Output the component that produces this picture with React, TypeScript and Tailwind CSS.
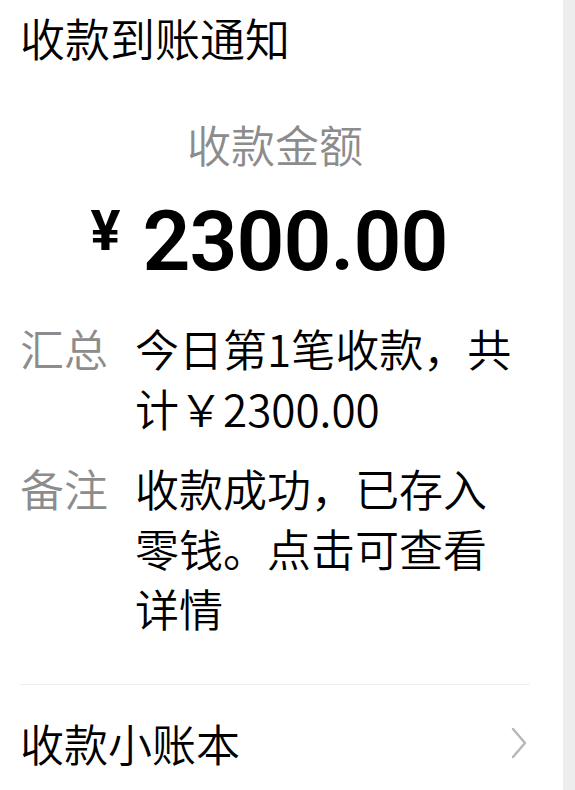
export default function App() {
  const rows = [
    { label: '汇总', value: '今日第1笔收款，共计￥2300.00' },
    { label: '备注', value: '收款成功，已存入零钱。点击可查看详情' },
  ]

  return (
    <div className="flex h-[790px] w-full overflow-hidden bg-[#ededed] font-['Noto_Sans_CJK_SC',sans-serif] font-[350]">
      <div className="flex w-[563px] flex-col bg-white pl-[20px] pr-[33px]">
        <h1 className="pt-[8px] text-[45px] leading-[60px] font-[350] text-black">收款到账通知</h1>

        <div className="mt-[46px] text-center text-[44px] leading-[60px] text-[#8c8c8c]">收款金额</div>

        <div className="mt-[23px] flex items-start justify-center pr-[12px] text-black">
          <span className="mt-[4px] mr-[22px] font-['Roboto',sans-serif] text-[56px] leading-[60px] font-bold">¥</span>
          <span className="font-['Roboto',sans-serif] text-[84px] leading-[90px] font-semibold tracking-[-1px]">2300.00</span>
        </div>

        <div className="mt-[31px] flex flex-col gap-[20px]">
          {rows.map((row) => (
            <div key={row.label} className="flex">
              <div className="w-[115px] shrink-0 text-[44px] leading-[60px] text-[#8c8c8c]">{row.label}</div>
              <div className="w-[392px] text-[44px] leading-[60px] text-black">{row.value}</div>
            </div>
          ))}
        </div>

        <div className="mt-[46px] h-px bg-[#eeeeee]" />

        <div className="mt-[28px] flex items-center justify-between">
          <span className="text-[44px] leading-[60px] text-black">收款小账本</span>
          <svg width="18" height="34" viewBox="0 0 18 34" fill="none" className="mr-[2px]">
            <path d="M3 3 L15 17 L3 31" stroke="#b8b8b8" strokeWidth="2.5" strokeLinecap="round" strokeLinejoin="round" />
          </svg>
        </div>
      </div>
      <div className="flex-1" />
    </div>
  )
}
